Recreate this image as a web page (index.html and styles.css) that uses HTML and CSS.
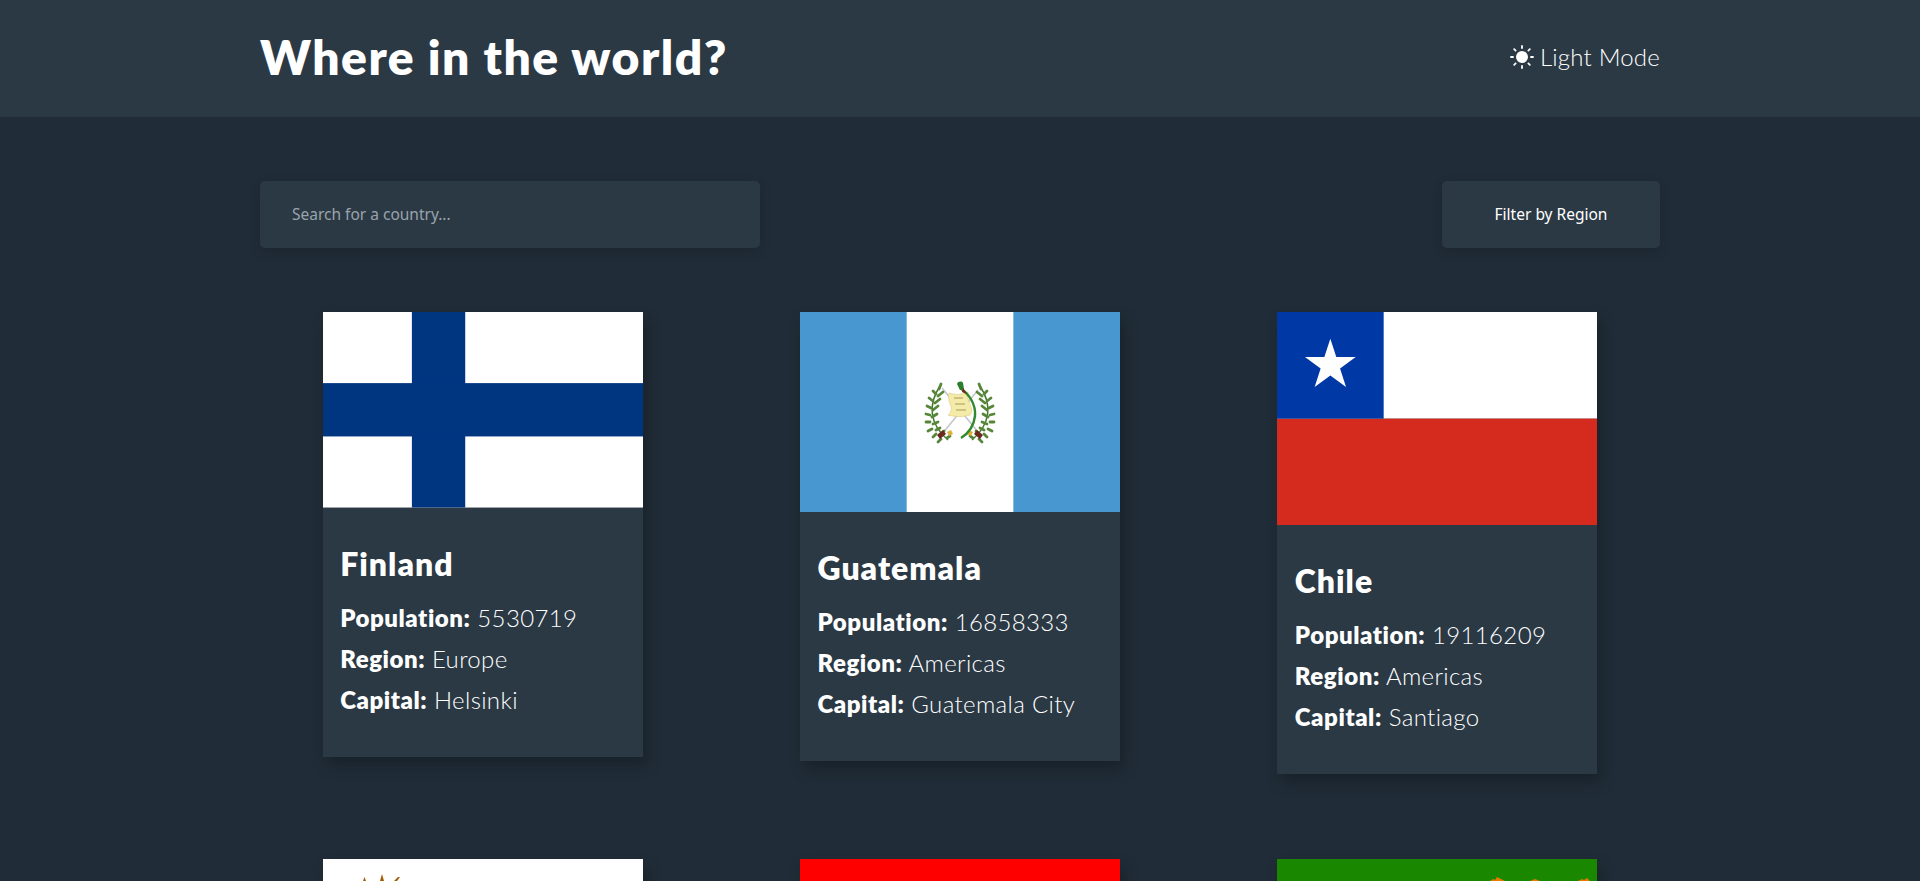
FILE: index.html
```html
<!DOCTYPE html>
<html lang="en">
  <head>
    <meta charset="UTF-8" />
    <meta name="viewport" content="width=device-width, initial-scale=1.0" />
    <title>Where in the world?</title>
    <link rel="stylesheet" href="styles.css">
  </head>
  <body>
    <header class="topbar">
      <div class="topbar-inner">
        <h1>Where in the world?</h1>
        <button class="mode-btn" type="button">
          <svg class="sun" viewBox="0 0 24 24" width="24" height="24" aria-hidden="true">
            <circle cx="12" cy="12" r="6" fill="#fff" />
            <path d="M12 1v2M12 21v2M1 12h2M21 12h2M4.200 4.200l1.400 1.400M18.400 18.400l1.400 1.400M4.200 19.800l1.400-1.400M18.400 5.600l1.400-1.400" stroke="#fff" stroke-width="1.800" stroke-linecap="round" fill="none" />
          </svg>
          Light Mode
        </button>
      </div>
    </header>
    <main class="content">
      <form class="controls">
        <input class="search" type="text" placeholder="Search for a country..." />
        <button class="filter" type="button">Filter by Region</button>
      </form>
      <section class="countries">
        <article class="card">
          <svg class="flag" viewBox="0 0 18 11" aria-label="Flag of Finland">
            <rect width="18" height="11" fill="#fff" />
            <rect x="5" width="3" height="11" fill="#003580" />
            <rect y="4" width="18" height="3" fill="#003580" />
          </svg>
          <div class="card-body">
            <h2>Finland</h2>
            <p><b>Population:</b> 5530719</p>
            <p><b>Region:</b> Europe</p>
            <p><b>Capital:</b> Helsinki</p>
          </div>
        </article>
        <article class="card">
          <svg class="flag" viewBox="0 0 320 200" aria-label="Flag of Guatemala">
            <defs>
              <g id="wreath" transform="translate(2 0)">
                <path d="M138 74C126 92 127 112 146 128" stroke="#3f7a2a" stroke-width="1.500" fill="none" />
                <path d="M137 77l2-5M134 82l-3-3M136 84l5-4M131 89l-4-3M133 91l5-4M129 96l-4-2M131 98l5-4M128 103l-4-1M130 105l5-3M128 110l-4 0M131 112l5-2M130 117l-4 2M134 118l4-2M134 122l-3 3M139 122l3-3M139 127l-3 3M145 126l3-2" stroke="#55863a" stroke-width="2.800" stroke-linecap="round" fill="none" />
                <path d="M141 118l-6 5 3 4 6-5z" fill="#6b2a1c" />
                <path d="M145 120l4-2 2 4-4 2z" fill="#d9b13a" />
              </g>
            </defs>
            <rect width="320" height="200" fill="#4997d0" />
            <rect x="106.670" width="106.670" height="200" fill="#fff" />
            <path d="M142 76l36 44M178 78l-36 44" stroke="#c4c7ca" stroke-width="1.600" />
            <use href="#wreath" />
            <use href="#wreath" transform="matrix(-1 0 0 1 320 0)" />
            <path d="M149 81c6 2 13 2 19-1-1 6 1 10 3 15 1 3 1 6-1 8-7 2-15 2-22 0 3-2 4-6 3-9-2-4-3-8-2-13z" fill="#f5eba8" stroke="#e0cf84" stroke-width=".700" />
            <path d="M154 86h9M155 92h10M156 98h10" stroke="#a89a5c" stroke-width="1.100" />
            <path d="M160 76c9 6 16 16 15 28-1 9-6 17-14 22" stroke="#338a2e" stroke-width="2.400" fill="none" />
            <path d="M157 72c1-3 5-3 6-1l1 6-4 1z" fill="#2c7d2c" />
            <path d="M163 76l4 6-5-2z" fill="#7a2418" />
          </svg>
          <div class="card-body">
            <h2>Guatemala</h2>
            <p><b>Population:</b> 16858333</p>
            <p><b>Region:</b> Americas</p>
            <p><b>Capital:</b> Guatemala City</p>
          </div>
        </article>
        <article class="card">
          <svg class="flag" viewBox="0 0 6 4" aria-label="Flag of Chile">
            <rect width="6" height="2" fill="#fff" />
            <rect y="2" width="6" height="2" fill="#d52b1e" />
            <rect width="2" height="2" fill="#0039a6" />
            <path d="M1 .5L1.112 .846H1.476L1.182 1.059L1.294 1.405L1 1.191L.706 1.405L.818 1.059L.524 .846H.888z" fill="#fff" />
          </svg>
          <div class="card-body">
            <h2>Chile</h2>
            <p><b>Population:</b> 19116209</p>
            <p><b>Region:</b> Americas</p>
            <p><b>Capital:</b> Santiago</p>
          </div>
        </article>
        <article class="card">
          <svg class="flag" viewBox="0 0 320 200" aria-hidden="true">
            <rect width="320" height="200" fill="#fff" />
            <path d="M40 22l1.500-4 1.500 4zM57 22l2-7 2 7zM71 22l4-4 2 0-3 4z" fill="#a15c00" />
          </svg>
        </article>
        <article class="card">
          <svg class="flag" viewBox="0 0 320 200" aria-hidden="true">
            <rect width="320" height="200" fill="#f00" />
          </svg>
        </article>
        <article class="card">
          <svg class="flag" viewBox="0 0 320 200" aria-hidden="true">
            <rect width="320" height="200" fill="#1a8700" />
            <path d="M213 22l3-2 2 1 2-3 4 2 4 2zM253 22l5-2 5 2zM301 22l4-2 2 1 3-2 3 3z" fill="#e87a00" />
          </svg>
        </article>
      </section>
    </main>
  </body>
</html>
```

FILE: styles.css
```css
* {
  box-sizing: border-box;
}
html,
body {
  height: 881px;
  overflow: hidden;
}
body {
  margin: 0;
  background-color: #202c37;
  color: #fff;
  font-family: "Lato", "Open Sans", sans-serif;
}
.topbar {
  height: 117px;
  background-color: #2b3945;
}
.topbar-inner {
  width: 1400px;
  height: 100%;
  margin: 0 auto;
  padding-bottom: 4px;
  display: flex;
  justify-content: space-between;
  align-items: center;
}
h1 {
  margin: 0;
  font-size: 48px;
  font-weight: 800;
  letter-spacing: 1.5px;
}
.mode-btn {
  display: flex;
  align-items: center;
  gap: 6px;
  padding: 0;
  border: none;
  background: none;
  color: #fff;
  font-family: inherit;
  font-size: 24px;
  font-weight: 300;
  letter-spacing: 0.2px;
  cursor: pointer;
}
.content {
  width: 1400px;
  margin: 0 auto;
  padding-top: 64px;
}
.controls {
  display: flex;
  justify-content: space-between;
  margin-bottom: 64px;
}
.search,
.filter {
  height: 67px;
  padding-bottom: 2px;
  border: none;
  border-radius: 5px;
  background-color: #2b3945;
  color: #fff;
  font-family: "Noto Sans", sans-serif;
  font-size: 15.5px;
  box-shadow: 0 4px 12px rgba(0, 0, 0, 0.15);
}
.search {
  width: 500px;
  padding-left: 32px;
  padding-right: 32px;
}
.search::placeholder {
  color: #9aa3ab;
  opacity: 1;
}
.filter {
  width: 218px;
  cursor: pointer;
}
.countries {
  display: grid;
  grid-template-columns: repeat(3, 1fr);
  column-gap: 32px;
  row-gap: 85px;
  align-items: start;
  justify-items: center;
}
.card {
  width: 320px;
  background-color: #2b3945;
  box-shadow: 4px 8px 14px rgba(0, 0, 0, 0.25);
}
.flag {
  display: block;
  width: 100%;
  height: auto;
}
.card-body {
  height: 249px;
  padding: 36px 17.5px 0;
}
.card-body h2 {
  margin: 0 0 14px;
  font-size: 32px;
  font-weight: 800;
  letter-spacing: 1px;
}
.card-body p {
  margin: 0;
  font-size: 24px;
  font-weight: 300;
  line-height: 41px;
  letter-spacing: 0.35px;
}
.card-body b {
  font-weight: 800;
  letter-spacing: 0.55px;
}
```
